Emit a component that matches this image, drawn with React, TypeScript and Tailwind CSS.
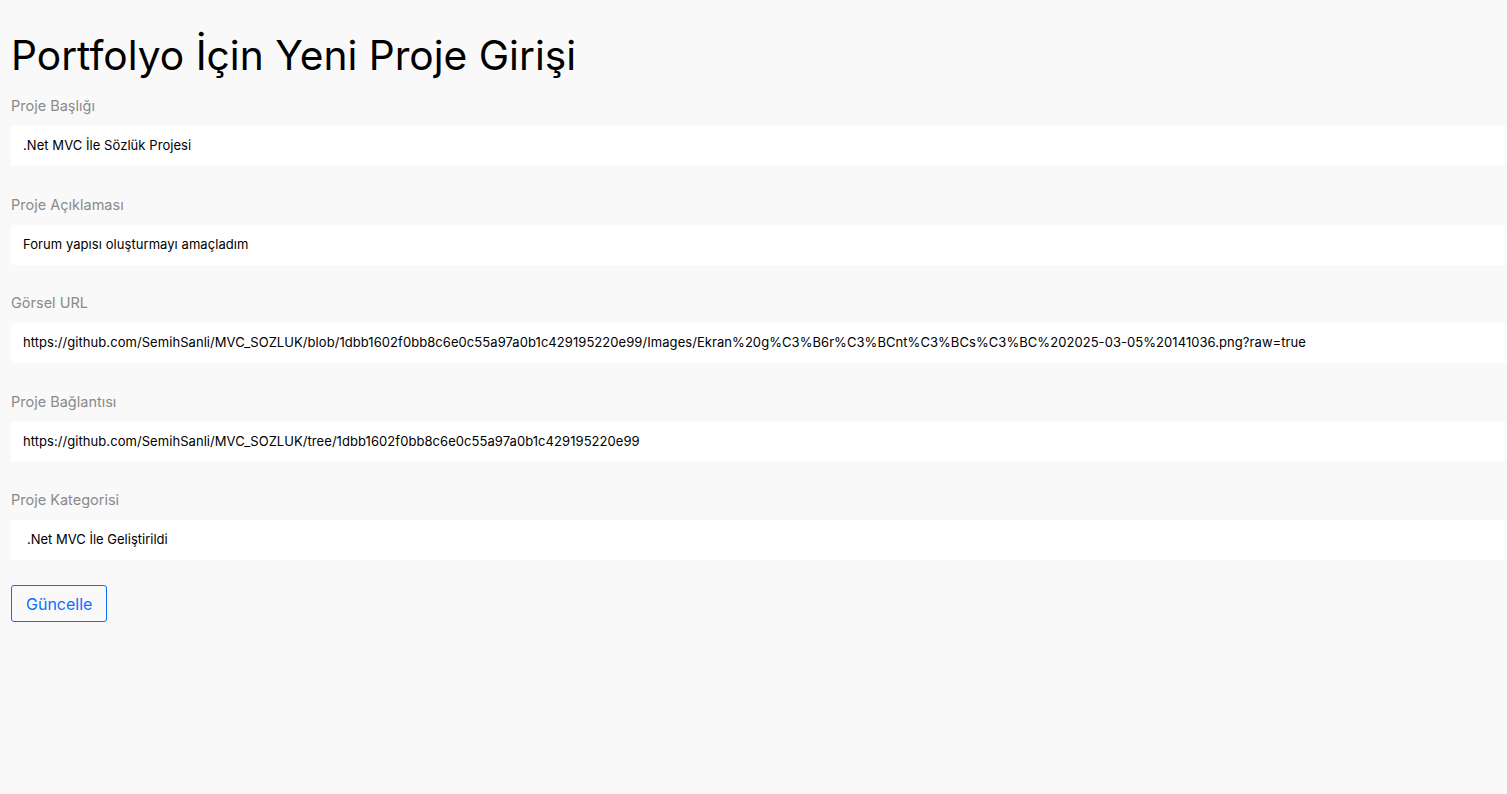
const fields = [
  { label: "Proje Başlığı", value: ".Net MVC İle Sözlük Projesi" },
  { label: "Proje Açıklaması", value: "Forum yapısı oluşturmayı amaçladım" },
  {
    label: "Görsel URL",
    value:
      "https://github.com/SemihSanli/MVC_SOZLUK/blob/1dbb1602f0bb8c6e0c55a97a0b1c429195220e99/Images/Ekran%20g%C3%B6r%C3%BCnt%C3%BCs%C3%BC%202025-03-05%20141036.png?raw=true",
  },
  {
    label: "Proje Bağlantısı",
    value: "https://github.com/SemihSanli/MVC_SOZLUK/tree/1dbb1602f0bb8c6e0c55a97a0b1c429195220e99",
  },
];

export default function App() {
  return (
    <div className="min-h-[794px] w-full overflow-hidden bg-[#f9f9f9] pl-[11px] pt-[31px] font-['Inter',sans-serif]">
      <h1 className="mb-[14px] text-[40.7px] leading-[50px] font-normal text-black">
        Portfolyo İçin Yeni Proje Girişi
      </h1>

      {fields.map((f) => (
        <div key={f.label} className="mb-[27.5px]">
          <label className="mb-[10px] block text-[14.5px] leading-[21px] text-[#8a8a8a]">{f.label}</label>
          <div className="flex h-[40px] w-full items-center rounded-[3px] bg-white px-[12px] text-[13px] tracking-[0.06px] whitespace-nowrap text-black">
            {f.value}
          </div>
        </div>
      ))}

      <div className="mb-[25px]">
        <label className="mb-[10px] block text-[14.5px] leading-[21px] text-[#8a8a8a]">Proje Kategorisi</label>
        <div className="flex h-[40px] w-full items-center rounded-[3px] bg-white px-[16px] text-[13px] text-black">
          .Net MVC İle Geliştirildi
        </div>
      </div>

      <button
        type="button"
        className="h-[37px] rounded-[3px] border border-[#0d6efd] px-[14px] text-[16px] text-[#0d6efd]"
      >
        Güncelle
      </button>
    </div>
  );
}
